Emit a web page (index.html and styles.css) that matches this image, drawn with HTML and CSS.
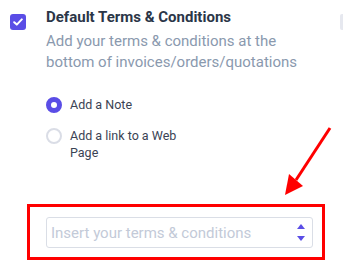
FILE: index.html
```html
<!DOCTYPE html>
<html lang="en">
<head>
  <meta charset="UTF-8" />
  <title>Terms Settings</title>
  <link rel="stylesheet" href="styles.css">
</head>
<body>

  <div class="setting">
    <div class="check-col">
      <span class="checkbox">
        <svg width="10" height="8" viewBox="0 0 10 8"><path d="M1.2 4.2 L3.8 6.6 L8.8 1.4" fill="none" stroke="#fff" stroke-width="2" stroke-linecap="round" stroke-linejoin="round"/></svg>
      </span>
    </div>
    <div class="content">
      <h3 class="title">Default Terms &amp; Conditions</h3>
      <p class="desc">Add your terms &amp; conditions at the bottom of invoices/orders/quotations</p>

      <div class="options">
        <label class="option">
          <span class="radio checked"></span>
          <span class="option-text">Add a Note</span>
        </label>
        <label class="option">
          <span class="radio"></span>
          <span class="option-text">Add a link to a Web Page</span>
        </label>
      </div>

      <div class="highlight">
        <div class="field">
          <span class="placeholder">Insert your terms &amp; conditions</span>
          <span class="spinner">
            <span class="up"></span>
            <span class="down"></span>
          </span>
        </div>
      </div>
    </div>
    <div class="edge-tab"></div>
  </div>

  <svg class="arrow" width="60" height="80" viewBox="0 0 60 80">
    <line x1="55" y1="8" x2="21" y2="60" stroke="#ff0000" stroke-width="3"/>
    <polygon points="10,75 14,54 28,66" fill="#ff0000"/>
  </svg>

</body>
</html>
```

FILE: styles.css
```css
* {
  box-sizing: border-box;
}

body {
  margin: 0;
  background-color: #fff;
  font-family: Roboto, "Noto Sans", sans-serif;
  width: 343px;
  height: 271px;
  overflow: hidden;
  position: relative;
}

.setting {
  display: flex;
  padding-top: 8px;
}

.check-col {
  width: 46px;
  padding-left: 10px;
  padding-top: 6px;
}

.checkbox {
  width: 16px;
  height: 16px;
  border-radius: 3px;
  background-color: #5a4de6;
  display: flex;
  align-items: center;
  justify-content: center;
}

.content {
  width: 280px;
}

.title {
  margin: 0;
  font-size: 15px;
  font-weight: 700;
  color: #2b3648;
  line-height: 18px;
}

.desc {
  margin: 5px 0 0;
  font-size: 15px;
  line-height: 21px;
  color: #8a99ae;
  width: 260px;
}

.options {
  margin-top: 24px;
  display: flex;
  flex-direction: column;
  gap: 15px;
}

.option {
  display: flex;
  align-items: flex-start;
  gap: 8px;
}

.radio {
  width: 16px;
  height: 16px;
  border-radius: 50%;
  border: 2px solid #dadde6;
  flex-shrink: 0;
}

.radio.checked {
  border: 5px solid #5a4de6;
  background-color: #fff;
}

.option-text {
  font-size: 12.5px;
  line-height: 17px;
  color: #3a4354;
  width: 120px;
  margin-top: -1px;
}

.highlight {
  margin-top: 43px;
  margin-left: -19px;
  width: 298px;
  border: 3px solid #ff0000;
  padding: 10px 9px 9px 16px;
}

.field {
  height: 31px;
  border: 1px solid #dadee6;
  border-radius: 3px;
  display: flex;
  align-items: center;
  justify-content: space-between;
  padding: 0 7px 0 4px;
}

.placeholder {
  font-size: 15px;
  color: #c3cad8;
}

.spinner {
  display: flex;
  flex-direction: column;
  gap: 7px;
}

.spinner .up {
  width: 0;
  height: 0;
  border-left: 4px solid transparent;
  border-right: 4px solid transparent;
  border-bottom: 5px solid #5a4de6;
}

.spinner .down {
  width: 0;
  height: 0;
  border-left: 4px solid transparent;
  border-right: 4px solid transparent;
  border-top: 5px solid #5a4de6;
}

.edge-tab {
  margin-left: auto;
  margin-top: 6px;
  width: 3px;
  height: 16px;
  background-color: #e6e8ef;
  border-radius: 2px 0 0 2px;
}

.arrow {
  position: absolute;
  left: 275px;
  top: 120px;
}
```
